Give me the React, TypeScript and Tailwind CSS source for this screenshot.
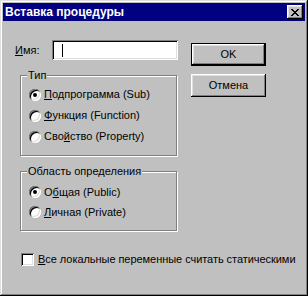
import React from "react";

const raised =
  "shadow-[inset_-1px_-1px_#000,inset_1px_1px_#fff,inset_-2px_-2px_#808080,inset_2px_2px_#dfdfdf]";
const sunken =
  "shadow-[inset_1px_1px_#808080,inset_-1px_-1px_#fff,inset_2px_2px_#000,inset_-2px_-2px_#dfdfdf]";

type RadioProps = {
  checked?: boolean;
  children: React.ReactNode;
  rowClass: string;
};

const Radio: React.FC<RadioProps> = ({ checked, children, rowClass }) => (
  <div className={`flex items-center ${rowClass}`}>
    <div
      className={`w-[12px] h-[12px] rounded-full bg-white flex items-center justify-center ${sunken}`}
    >
      {checked && <div className="w-[4px] h-[4px] rounded-full bg-black" />}
    </div>
    <span className="ml-[3px]">{children}</span>
  </div>
);

type GroupProps = {
  title: string;
  className: string;
  children: React.ReactNode;
};

const Group: React.FC<GroupProps> = ({ title, className, children }) => (
  <div
    className={`relative ml-[5px] w-[157px] border border-[#808080] shadow-[inset_1px_1px_#fff,1px_1px_#fff] pl-[8px] ${className}`}
  >
    <span className="absolute left-[6px] top-[-8px] bg-[#c0c0c0] px-[1px] leading-[14px]">
      {title}
    </span>
    {children}
  </div>
);

export default function App() {
  return (
    <div
      className="w-[308px] h-[296px] bg-[#c0c0c0] p-[3px] flex flex-col text-[11px] text-black shadow-[inset_-1px_-1px_#000,inset_1px_1px_#dfdfdf,inset_-2px_-2px_#808080,inset_2px_2px_#fff]"
      style={{ fontFamily: '"Liberation Sans", Arial, sans-serif' }}
    >
      {/* title bar */}
      <div className="h-[18px] bg-[#000080] flex items-center pl-[2px] pr-[2px]">
        <span className="text-white font-bold text-[12px] flex-1">
          Вставка процедуры
        </span>
        <div
          className={`w-[16px] h-[14px] bg-[#c0c0c0] flex items-center justify-center ${raised}`}
        >
          <svg width="8" height="7" viewBox="0 0 8 7" shapeRendering="crispEdges">
            <path
              d="M0 0h2v1h-2zM6 0h2v1h-2zM1 1h2v1h-2zM5 1h2v1h-2zM2 2h4v1h-4zM3 3h2v1h-2zM2 4h4v1h-4zM1 5h2v1h-2zM5 5h2v1h-2zM0 6h2v1h-2zM6 6h2v1h-2z"
              fill="#000"
            />
          </svg>
        </div>
      </div>

      <div className="flex pt-[19px] pl-[12px]">
        {/* left column */}
        <div className="w-[163px] flex flex-col">
          <div className="flex items-center h-[20px]">
            <span className="w-[37px]">
              <u>И</u>мя:
            </span>
            <div
              className={`w-[126px] h-[20px] bg-white flex items-center pl-[10px] ${sunken}`}
            >
              <div className="w-[1px] h-[13px] bg-black" />
            </div>
          </div>

          <Group title="Тип" className="mt-[15px] pt-[8px] pb-[8px]">
            <Radio checked rowClass="h-[21px]">
              <u>П</u>одпрограмма (Sub)
            </Radio>
            <Radio rowClass="h-[21px]">
              <u>Ф</u>ункция (Function)
            </Radio>
            <Radio rowClass="h-[21px]">
              Сво<u>й</u>ство (Property)
            </Radio>
          </Group>

          <Group title="Область определения" className="mt-[15px] pt-[10px] pb-[8px]">
            <Radio checked rowClass="h-[20px]">
              О<u>б</u>щая (Public)
            </Radio>
            <Radio rowClass="h-[20px]">
              <u>Л</u>ичная (Private)
            </Radio>
          </Group>
        </div>

        {/* buttons */}
        <div className="ml-[13px] pt-[3px] flex flex-col gap-[8px]">
          <div className="w-[75px] h-[23px] border border-black">
            <div
              className={`w-full h-full bg-[#c0c0c0] flex items-center justify-center ${raised}`}
            >
              OK
            </div>
          </div>
          <div
            className={`w-[75px] h-[23px] bg-[#c0c0c0] flex items-center justify-center ${raised}`}
          >
            Отмена
          </div>
        </div>
      </div>

      <div className="flex items-center mt-[20px] ml-[18px]">
        <div className={`w-[13px] h-[13px] bg-white ${sunken}`} />
        <span className="ml-[4px] tracking-[-0.05px]">
          <u>В</u>се локальные переменные считать статическими
        </span>
      </div>
    </div>
  );
}
